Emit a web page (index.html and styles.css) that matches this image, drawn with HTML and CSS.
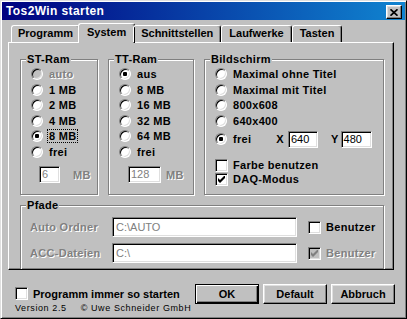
FILE: index.html
```html
<!DOCTYPE html>
<html lang="de">
<head>
  <meta charset="UTF-8">
  <title>Tos2Win starten</title>
  <link rel="stylesheet" href="styles.css">
</head>
<body>
  <div class="window">
    <div class="titlebar">
      <span>Tos2Win starten</span>
      <span class="close"><svg width="8" height="7" viewBox="0 0 8 7"><path d="M0.5 0.3 L7.5 6.7 M7.5 0.3 L0.5 6.7" stroke="#000" stroke-width="1.7"/></svg></span>
    </div>

    <div class="main">
      <div class="tabs">
        <span class="tab">Programm</span>
        <span class="tab active">System</span>
        <span class="tab">Schnittstellen</span>
        <span class="tab">Laufwerke</span>
        <span class="tab">Tasten</span>
      </div>

      <div class="panel">
        <div class="groups">
          <div class="group st">
            <div class="legend">ST-Ram</div>
            <div class="opts">
              <div class="opt off"><span class="radio"></span>auto</div>
              <div class="opt"><span class="radio"></span>1 MB</div>
              <div class="opt"><span class="radio"></span>2 MB</div>
              <div class="opt"><span class="radio"></span>4 MB</div>
              <div class="opt"><span class="radio on"></span><span class="focus">8 MB</span></div>
              <div class="opt"><span class="radio"></span>frei</div>
              <div class="size"><span class="field gray">6</span><span class="unit dim">MB</span></div>
            </div>
          </div>

          <div class="group tt">
            <div class="legend">TT-Ram</div>
            <div class="opts">
              <div class="opt"><span class="radio on"></span>aus</div>
              <div class="opt"><span class="radio"></span>8 MB</div>
              <div class="opt"><span class="radio"></span>16 MB</div>
              <div class="opt"><span class="radio"></span>32 MB</div>
              <div class="opt"><span class="radio"></span>64 MB</div>
              <div class="opt"><span class="radio"></span>frei</div>
              <div class="size"><span class="field gray">128</span><span class="unit dim">MB</span></div>
            </div>
          </div>

          <div class="group screen">
            <div class="legend">Bildschirm</div>
            <div class="opts">
              <div class="opt"><span class="radio"></span>Maximal ohne Titel</div>
              <div class="opt"><span class="radio"></span>Maximal mit Titel</div>
              <div class="opt"><span class="radio"></span>800x608</div>
              <div class="opt"><span class="radio"></span>640x400</div>
              <div class="opt frei">
                <span class="radio on"></span><span>frei</span>
                <span class="xy">X<span class="field">640</span><span class="ylbl">Y</span><span class="field">480</span></span>
              </div>
              <div class="checks">
                <div class="chk-row"><span class="check"></span>Farbe benutzen</div>
                <div class="chk-row"><span class="check"><svg width="7" height="7" viewBox="0 0 7 7"><path d="M0 2 L2 4 L7 -1 L7 2 L2 7 L0 5 Z" fill="#000"/></svg></span>DAQ-Modus</div>
              </div>
            </div>
          </div>
        </div>

        <div class="group pfade">
          <div class="legend">Pfade</div>
          <div class="paths">
            <div class="path-row">
              <span class="plbl dim">Auto Ordner</span>
              <span class="field wide gray">C:\AUTO</span>
              <span class="check"></span><span class="user">Benutzer</span>
            </div>
            <div class="path-row">
              <span class="plbl dim">ACC-Dateien</span>
              <span class="field wide gray">C:\</span>
              <span class="check off"><svg width="7" height="7" viewBox="0 0 7 7"><path d="M0 2 L2 4 L7 -1 L7 2 L2 7 L0 5 Z" fill="#808080"/></svg></span><span class="user dim">Benutzer</span>
            </div>
          </div>
        </div>
      </div>
    </div>

    <div class="footer">
      <div class="footer-left">
        <div class="chk-row"><span class="check"></span>Programm immer so starten</div>
        <div class="version"><span>Version 2.5</span><span class="copy">© Uwe Schneider GmbH</span></div>
      </div>
      <div class="buttons">
        <span class="btn def">OK</span>
        <span class="btn">Default</span>
        <span class="btn">Abbruch</span>
      </div>
    </div>
  </div>
</body>
</html>
```

FILE: styles.css
```css
* { box-sizing: border-box; }
body { margin: 0; background: #c0c0c0; font-family: "Liberation Sans", Arial, sans-serif; font-size: 11px; font-weight: bold; color: #000; }

.window { width: 407px; height: 319px; padding: 1px; background: #c0c0c0; border: 1px solid; border-color: #dfdfdf #000 #000 #dfdfdf; box-shadow: inset 1px 1px #fff, inset -1px -1px #808080; }

.titlebar { height: 18px; display: flex; align-items: center; justify-content: space-between; padding: 0 3px 0 4px; background: linear-gradient(to right, #000080, #1084d0); color: #fff; font-size: 12px; letter-spacing: 0.4px; }
.close { width: 16px; height: 14px; margin-top: 2px; display: flex; align-items: center; justify-content: center; background: #c0c0c0; border: 1px solid; border-color: #fff #000 #000 #fff; box-shadow: inset -1px -1px #808080, inset 1px 1px #dfdfdf; }

.main { padding: 3px 11px 0 6px; }

/* tabs */
.tabs { display: flex; align-items: flex-end; padding-left: 3px; position: relative; z-index: 1; }
.tab { padding: 0 7px 2px; line-height: 14px; border: 1px solid; border-bottom: 0; border-color: #fff #000 #000 #fff; border-radius: 3px 3px 0 0; box-shadow: inset -1px 0 #808080; }
.tab:first-child { padding: 0 6px 2px; }
.tab.active { padding: 1px 8px 4px; margin: 0 -2px -1px; background: #c0c0c0; }

.panel { height: 228px; padding: 16px 9px 0 11px; overflow: hidden; border: 1px solid; border-color: #fff #000 #000 #fff; box-shadow: inset -1px -1px #808080; }

/* group boxes */
.groups { display: flex; gap: 10px; }
.group { border: 1px solid #808080; box-shadow: inset 1px 1px #fff, 1px 1px #fff; letter-spacing: 0.3px; }
.groups .group { height: 136px; }
.st { width: 78px; }
.tt { width: 86px; }
.screen { flex: 1; }
.legend { width: fit-content; margin: -7px 0 0 5px; padding: 0 1px; line-height: 13px; background: #c0c0c0; }

.opts { padding: 0.5px 0 0 10px; }
.opt { display: flex; align-items: center; gap: 6px; height: 15.5px; }
.off, .dim { color: #808080; text-shadow: 1px 1px #fff; }
.focus { outline: 1px dotted #000; line-height: 12px; padding: 0 1px; margin-left: -1px; }

.radio { position: relative; flex: none; width: 12px; height: 12px; border-radius: 50%; background: #fff; border: 1px solid; border-color: #808080 #fff #fff #808080; box-shadow: inset 1px 1px #000, inset -1px -1px #dfdfdf; }
.radio.on::after { content: ""; position: absolute; left: 3px; top: 3px; width: 4px; height: 4px; border-radius: 1px; background: #000; }
.off .radio { background: #c0c0c0; }

.check { flex: none; width: 13px; height: 13px; display: flex; align-items: center; justify-content: center; background: #fff; border: 1px solid; border-color: #808080 #fff #fff #808080; box-shadow: inset 1px 1px #000, inset -1px -1px #dfdfdf; }
.check.off { background: #c0c0c0; }

.field { height: 17px; padding: 0 2px; line-height: 15px; font-weight: normal; letter-spacing: 0; background: #fff; border: 1px solid; border-color: #808080 #fff #fff #808080; box-shadow: inset 1px 1px #000, inset -1px -1px #dfdfdf; }
.field.gray { color: #808080; }

.size { display: flex; align-items: center; margin-top: 6.5px; }
.st .field { width: 21px; margin-left: 8px; }
.st .unit { margin-left: 13px; }
.tt .field { width: 33px; margin-left: 9px; }
.tt .unit { margin-left: 5px; }

.opt.frei { height: 21px; }
.xy { display: flex; align-items: center; margin-left: 19px; }
.xy .field { width: 30px; margin-left: 4px; }
.xy .ylbl { margin-left: 13px; }
.xy .ylbl + .field { width: 31px; margin-left: 2px; }

.checks { margin-top: 8.5px; }
.chk-row { display: flex; align-items: center; gap: 5px; height: 14px; }

/* paths */
.pfade { height: 80px; margin-top: 10px; }
.paths { display: flex; flex-direction: column; gap: 6px; padding: 5px 0 0 9px; }
.path-row { display: flex; align-items: center; }
.plbl { width: 82px; }
.field.wide { width: 185px; height: 20px; line-height: 18px; padding-left: 3px; margin-right: 11px; }
.user { margin-left: 5px; }

/* footer */
.footer { display: flex; padding: 14px 10px 0 13px; }
.footer-left { padding-top: 3px; }
.footer-left .chk-row { height: 13px; }
.version { display: flex; margin-top: 3px; line-height: 11px; font-size: 9px; font-weight: normal; letter-spacing: 0.6px; }
.version .copy { margin-left: 14px; }

.buttons { display: flex; gap: 4px; margin-left: auto; }
.btn { width: 64px; height: 20px; display: flex; align-items: center; justify-content: center; border: 1px solid; border-color: #fff #000 #000 #fff; box-shadow: inset -1px -1px #808080, inset 1px 1px #dfdfdf; }
.btn.def { border-color: #000; box-shadow: inset 1px 1px #fff, inset -1px -1px #000, inset -2px -2px #808080; }
```
